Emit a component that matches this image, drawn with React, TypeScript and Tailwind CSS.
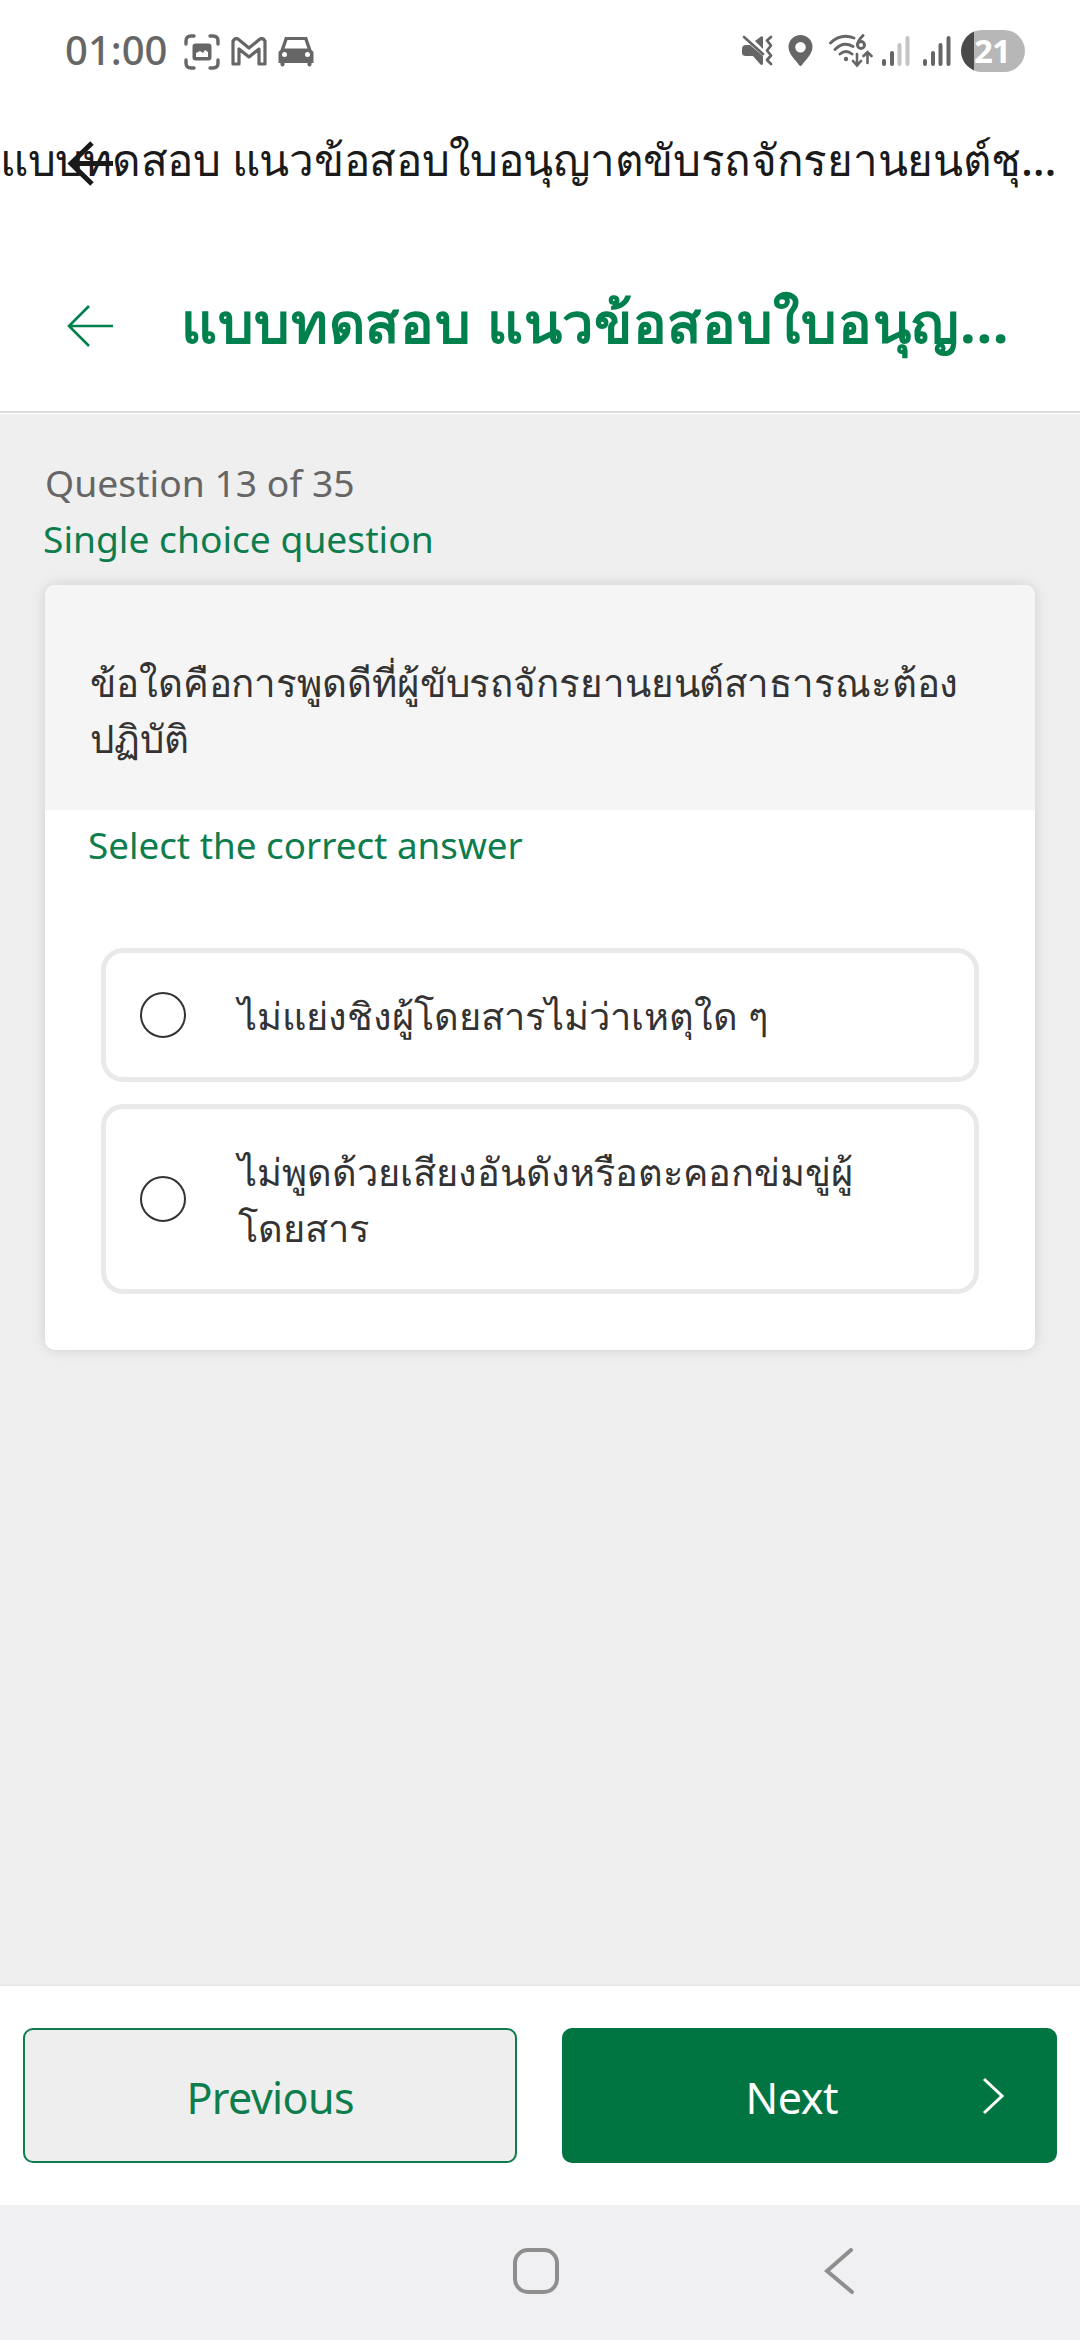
import React from "react";

const FONT = "font-['Noto_Sans',sans-serif]";

type TextLineProps = {
  children: React.ReactNode;
  className?: string;
};

const TextLine: React.FC<TextLineProps> = ({ children, className = "" }) => (
  <p className={`whitespace-nowrap ${className}`}>{children}</p>
);

const CaptureIcon = () => (
  <svg width="36" height="36" viewBox="0 0 36 36" fill="none">
    <path
      d="M2 10V7q0-5 5-5h3M26 2h3q5 0 5 5v3M34 26v3q0 5-5 5h-3M10 34H7q-5 0-5-5v-3"
      stroke="#666"
      strokeWidth="3.4"
      strokeLinecap="round"
    />
    <rect x="8.500" y="9.500" width="19" height="17" rx="3" fill="#666" />
    <path d="M12 23v-4l4-2 3 2 2-3 3 2v5z" fill="#fff" />
  </svg>
);

const MailIcon = () => (
  <svg width="36" height="29" viewBox="0 0 36 29" fill="none">
    <path
      d="M2 27V4q2-3.500 5-2l11 9 11-9q3-1.500 5 2v23h-6V12L18 20 8 12v15z"
      stroke="#666"
      strokeWidth="3.2"
      strokeLinejoin="round"
    />
  </svg>
);

const CarIcon = () => (
  <svg width="36" height="31" viewBox="0 0 36 31">
    <path
      d="M7 1h22l4.500 13 2 2v11h-2v2q-2 3-4 0v-2h-23v2q-2 3-4 0v-2h-2V16l2-2z"
      fill="#666"
    />
    <path d="M9.500 4h17l3 8.500h-23z" fill="#fff" />
    <circle cx="6.500" cy="18.500" r="2.500" fill="#fff" />
    <circle cx="29.500" cy="18.500" r="2.500" fill="#fff" />
  </svg>
);

const MuteIcon = () => (
  <svg width="31" height="31" viewBox="0 0 31 31" fill="none">
    <path d="M0 14q0-4 4-4h4l13 11v8q-1 2-3 0l-7-8H4q-4 0-4-3z" fill="#666" />
    <path d="M13 6l6-4.500q2-1 2 1V14z" fill="#666" />
    <path d="M2 2l19 17" stroke="#666" strokeWidth="2.600" strokeLinecap="round" />
    <path
      d="M29 2l-4 3.500 4 5-4 5 4 5-4 4.500 4 4"
      stroke="#666"
      strokeWidth="2.800"
      strokeLinejoin="round"
      strokeLinecap="round"
    />
  </svg>
);

const PinIcon = () => (
  <svg width="25" height="32" viewBox="0 0 25 32">
    <path
      fillRule="evenodd"
      d="M12.500 0a12 12 0 0 1 12 12c0 7-7 13-10.500 18q-1.500 2-3 0C7.500 25 .5 19 .5 12a12 12 0 0 1 12-12zm0 7a5.300 5.300 0 1 0 0 10.600a5.300 5.300 0 0 0 0-10.600z"
      fill="#666"
    />
  </svg>
);

const WifiIcon = () => (
  <svg width="44" height="34" viewBox="0 0 44 34" fill="none">
    <g stroke="#666" strokeWidth="2.900" strokeLinecap="round">
      <path d="M1.500 9Q12-1 25 4M6 15.500Q14 7 24 12.500M11 20q6-5 12 0" />
      <path
        d="M28 20v11m-4-4l4 4.500 4-4.500M38.500 29V18m-4 4l4-4 4 4"
        strokeWidth="2.600"
      />
      <path d="M34 1.500q-5 5-5.500 9" />
      <circle cx="32" cy="11" r="3.500" />
    </g>
    <circle cx="17" cy="25" r="2.200" fill="#666" />
  </svg>
);

type SignalIconProps = {
  dimmed?: boolean;
};

const SignalIcon: React.FC<SignalIconProps> = ({ dimmed }) => (
  <svg width="28" height="30" viewBox="0 0 28 30">
    <rect x="0" y="23" width="4" height="7" rx="2" fill="#666" />
    <rect x="8" y="15" width="4" height="15" rx="2" fill="#666" />
    <rect x="15.500" y="7" width="4" height="23" rx="2" fill={dimmed ? "#c4c4c4" : "#666"} />
    <rect x="23.500" y="0" width="4" height="30" rx="2" fill={dimmed ? "#c4c4c4" : "#666"} />
  </svg>
);

const StatusBar = () => (
  <div className="flex h-[101px] shrink-0 items-center pl-[65px] pr-[55px]">
    <span className="-mt-0.5 w-[119px] whitespace-nowrap text-[40px] font-medium leading-none text-[#666]">
      01:00
    </span>
    <div className="mt-0.5 flex items-center gap-[11px]">
      <CaptureIcon />
      <MailIcon />
      <CarIcon />
    </div>
    <div className="ml-auto flex items-center">
      <MuteIcon />
      <span className="w-[15px]" />
      <PinIcon />
      <span className="w-4" />
      <WifiIcon />
      <span className="w-[9px]" />
      <SignalIcon dimmed />
      <span className="w-[13px]" />
      <SignalIcon />
      <span className="w-[10px]" />
      <div className="flex h-[42px] w-[64px] items-center rounded-full bg-[linear-gradient(to_right,#4a4a4a_13px,#b7b7b7_13px)] pl-[13px] text-[33px] font-bold leading-[42px] tracking-[-1px] text-white">
        21
      </div>
    </div>
  </div>
);

type OptionProps = {
  lines: string[];
};

const Option: React.FC<OptionProps> = ({ lines }) => (
  <div className="flex items-center rounded-[22px] border-[5px] border-[#e9e9e9] py-[34px] pl-[34px]">
    <span className="h-[46px] w-[46px] shrink-0 rounded-full border-2 border-[#333]" />
    <div className="ml-[52px]">
      {lines.map((line) => (
        <TextLine key={line} className="text-[38px] leading-[56px] text-[#333]">
          {line}
        </TextLine>
      ))}
    </div>
  </div>
);

const App: React.FC = () => {
  return (
    <div className={`flex h-[2340px] w-[1080px] flex-col overflow-hidden bg-white ${FONT}`}>
      <StatusBar />

      <div className="relative h-[117px] shrink-0">
        <TextLine className="pt-[26px] text-[44px] font-medium leading-[64px] tracking-[-0.3px] text-[#1a1a1a]">
          แบบทดสอบ แนวข้อสอบใบอนุญาตขับรถจักรยานยนต์ชุ...
        </TextLine>
        <svg
          className="absolute left-[66px] top-[38px]"
          width="48"
          height="50"
          viewBox="0 0 48 50"
          fill="none"
          stroke="#1a1a1a"
          strokeWidth="5"
        >
          <path d="M26 4L5 24.500 26 45M5 24.500h42" />
        </svg>
      </div>

      <header className="flex h-[195px] shrink-0 items-center border-b-2 border-[#dcdcdc] bg-white pl-[67px]">
        <svg
          className="mt-[22px]"
          width="47"
          height="42"
          viewBox="0 0 47 42"
          fill="none"
          stroke="#00804c"
          strokeWidth="2.600"
        >
          <path d="M22 1L2 21l20 20M2 21h44" />
        </svg>
        <TextLine className="mt-[13px] ml-[67px] text-[56px] font-bold leading-[80px] tracking-[0.7px] text-[#00804c]">
          แบบทดสอบ แนวข้อสอบใบอนุญ...
        </TextLine>
      </header>

      <main className="mt-px flex-1 bg-[#efefef] px-[45px]">
        <TextLine className="pt-[41px] text-[37.3px] leading-[56px] text-[#666]">
          Question 13 of 35
        </TextLine>
        <TextLine className="-ml-0.5 text-[37.2px] leading-[56px] text-[#0d7d4d]">
          Single choice question
        </TextLine>

        <section className="mt-[18px] h-[765px] rounded-[10px] bg-white shadow-[0_0_14px_rgba(0,0,0,0.14)]">
          <div className="h-[225px] rounded-t-[10px] bg-[#f5f5f5] pl-[45px] pt-[69px] text-[38.5px] leading-[56px] text-[#333]">
            <TextLine className="tracking-[-0.1px]">
              ข้อใดคือการพูดดีที่ผู้ขับรถจักรยานยนต์สาธารณะต้อง
            </TextLine>
            <TextLine>ปฏิบัติ</TextLine>
          </div>
          <TextLine className="pl-[43px] pt-[7px] text-[36.8px] leading-[56px] text-[#0d7d4d]">
            Select the correct answer
          </TextLine>
          <div className="mx-14 mt-[75px] flex flex-col gap-[22px]">
            <Option lines={["ไม่แย่งชิงผู้โดยสารไม่ว่าเหตุใด ๆ"]} />
            <Option lines={["ไม่พูดด้วยเสียงอันดังหรือตะคอกข่มขู่ผู้", "โดยสาร"]} />
          </div>
        </section>
      </main>

      <footer className="flex h-[221px] shrink-0 gap-[45px] border-t-2 border-[#e9e9e9] bg-white px-[23px] pt-[42px]">
        <button className="h-[135px] w-[495px] rounded-[10px] border-2 border-[#0d7d4d] bg-[#eee] pt-[5px] text-[43px] tracking-[-0.6px] text-[#0d7d4d]">
          Previous
        </button>
        <button className="flex h-[135px] w-[495px] items-center rounded-[10px] bg-[#007542] pl-[183px] text-[43px] text-white">
          <span className="w-[237px] pt-[5px] text-left tracking-[-0.4px]">Next</span>
          <svg
            width="22"
            height="38"
            viewBox="0 0 22 38"
            fill="none"
            stroke="currentColor"
            strokeWidth="3"
          >
            <path d="M2 2l18 17L2 36" />
          </svg>
        </button>
      </footer>

      <nav className="flex h-[135px] shrink-0 items-center bg-[#f0f0f3] pb-[3px] pl-[513px]">
        <span className="h-[46px] w-[46px] rounded-[15px] border-4 border-[#8e8e8e]" />
        <svg
          className="ml-[265px]"
          width="30"
          height="46"
          viewBox="0 0 30 46"
          fill="none"
          stroke="#8e8e8e"
          strokeWidth="4"
          strokeLinecap="round"
        >
          <path d="M27 2L3 23l25 21" />
        </svg>
      </nav>
    </div>
  );
};

export default App;
